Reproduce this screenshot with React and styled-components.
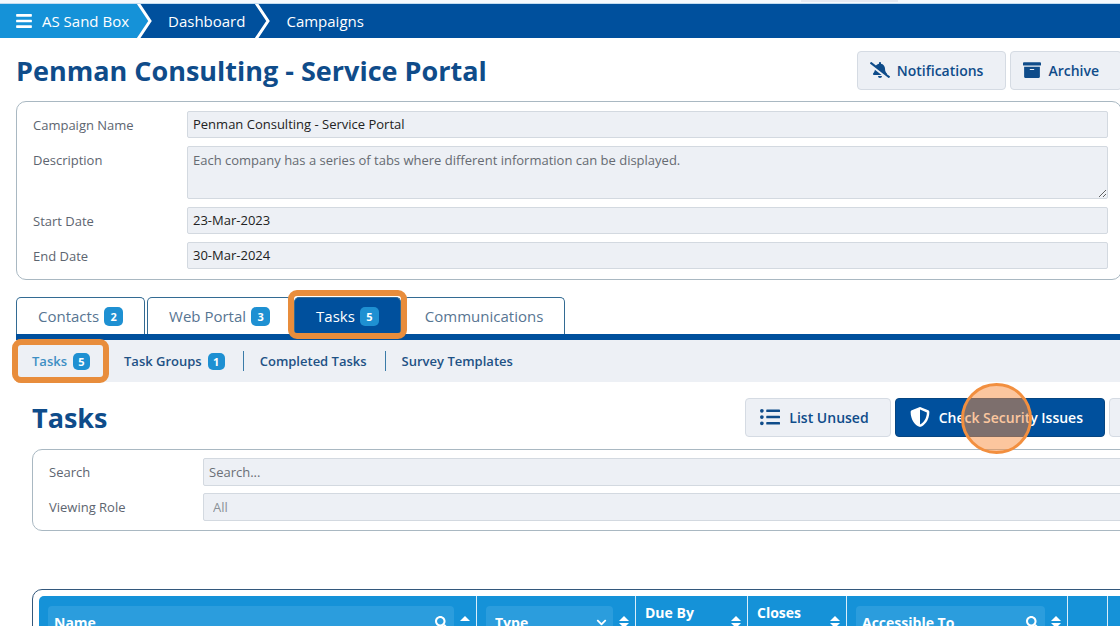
import React, { useState } from 'react'
import styled, { createGlobalStyle, css } from 'styled-components'
import { FaBars, FaBellSlash, FaArchive, FaListUl, FaShieldAlt, FaPlus, FaSearch, FaChevronDown } from 'react-icons/fa'

const colors = {
    navy: '#00509d',
    title: '#0f4c8a',
    sky: '#1592d8',
    field: '#edf0f5',
    orange: '#e88d3c',
}

const tabs = [
    { id: 'contacts', label: 'Contacts', count: 2 },
    { id: 'portal', label: 'Web Portal', count: 3 },
    { id: 'tasks', label: 'Tasks', count: 5 },
    { id: 'comms', label: 'Communications' },
]

const subTabs = [
    { id: 'tasks', label: 'Tasks', count: 5 },
    { id: 'groups', label: 'Task Groups', count: 1 },
    { id: 'completed', label: 'Completed Tasks' },
    { id: 'survey', label: 'Survey Templates' },
]

function SortIcon({ up }) {
    return (
        <svg width="10" height="12" viewBox="0 0 10 12" fill="#fff" aria-hidden="true">
            <path d="M0 5 5 0l5 5z" />
            {!up && <path d="M0 7h10l-5 5z" />}
        </svg>
    )
}

function Chevron() {
    return (
        <ChevronSvg viewBox="0 0 14 34" aria-hidden="true">
            <path className="fill" d="M0 0 12 17 0 34z" />
            <path className="line" d="M1 -1 13 17 1 35" />
        </ChevronSvg>
    )
}

function App() {
    const [tab, setTab] = useState('tasks')
    const [name, setName] = useState('Penman Consulting - Service Portal')
    const [description, setDescription] = useState('Each company has a series of tabs where different information can be displayed.')
    const [start, setStart] = useState('23-Mar-2023')
    const [end, setEnd] = useState('30-Mar-2024')

    return (
        <Page>
            <GlobalStyle />
            <BrowserEdge><span /></BrowserEdge>
            <Breadcrumbs aria-label="Breadcrumb">
                <Crumb href="#home" $first><FaBars size={18} />AS Sand Box</Crumb>
                <Chevron />
                <Crumb href="#dashboard">Dashboard</Crumb>
                <Chevron />
                <Crumb href="#campaigns">Campaigns</Crumb>
            </Breadcrumbs>

            <Main>
                <Header>
                    <h1>Penman Consulting - Service Portal</h1>
                    <Actions>
                        <Button type="button" $tight><FaBellSlash size={20} />Notifications</Button>
                        <Button type="button" $tight><FaArchive size={18} />Archive</Button>
                    </Actions>
                </Header>

                <Panel>
                    <FormRow>
                        <label htmlFor="name">Campaign Name</label>
                        <Input id="name" value={name} onChange={e => setName(e.target.value)} />
                    </FormRow>
                    <FormRow>
                        <label htmlFor="description">Description</label>
                        <TextArea id="description" value={description} onChange={e => setDescription(e.target.value)} />
                    </FormRow>
                    <FormRow>
                        <label htmlFor="start">Start Date</label>
                        <Input id="start" value={start} onChange={e => setStart(e.target.value)} />
                    </FormRow>
                    <FormRow>
                        <label htmlFor="end">End Date</label>
                        <Input id="end" value={end} onChange={e => setEnd(e.target.value)} />
                    </FormRow>
                </Panel>

                <Tabs>
                    {tabs.map(t => (
                        <Tab key={t.id} type="button" $active={t.id === tab} onClick={() => setTab(t.id)}>
                            {t.label}
                            {t.count && <Badge>{t.count}</Badge>}
                        </Tab>
                    ))}
                </Tabs>
                <SubNav>
                    {subTabs.map((t, i) => (
                        <SubLink key={t.id} href={`#${t.id}`} $active={i === 0} $divided={i > 1}>
                            {t.label}
                            {t.count && <Badge $small>{t.count}</Badge>}
                        </SubLink>
                    ))}
                </SubNav>

                <Section>
                    <SectionHeader>
                        <h2>Tasks</h2>
                        <Actions>
                            <Button type="button"><FaListUl size={20} />List Unused</Button>
                            <Button type="button" $primary>
                                <FaShieldAlt size={20} />Check Security Issues
                                <ClickMark />
                            </Button>
                            <Button type="button" aria-label="Add task"><FaPlus size={20} /></Button>
                        </Actions>
                    </SectionHeader>

                    <Panel $compact>
                        <FormRow>
                            <label htmlFor="search">Search</label>
                            <Input id="search" placeholder="Search..." $tall />
                        </FormRow>
                        <FormRow>
                            <label htmlFor="role">Viewing Role</label>
                            <Select id="role" defaultValue="all">
                                <option value="all">All</option>
                            </Select>
                        </FormRow>
                    </Panel>

                    <TableFrame>
                        <Table>
                            <colgroup>
                                <col />
                                <Col $w={159} />
                                <Col $w={112} />
                                <Col $w={99} />
                                <Col $w={221} />
                                <Col $w={40} />
                                <Col $w={52} />
                            </colgroup>
                            <thead>
                                <tr>
                                    <th>
                                        <HeadCell>
                                            <Filter>
                                                <input aria-label="Name" placeholder="Name" />
                                                <FaSearch size={13} />
                                            </Filter>
                                            <SortIcon up />
                                        </HeadCell>
                                    </th>
                                    <th>
                                        <HeadCell>
                                            <Filter>
                                                <select aria-label="Type" defaultValue="">
                                                    <option value="">Type</option>
                                                </select>
                                                <FaChevronDown size={11} />
                                            </Filter>
                                            <SortIcon />
                                        </HeadCell>
                                    </th>
                                    <th><HeadCell><Plain>Due By</Plain><SortIcon /></HeadCell></th>
                                    <th><HeadCell><Plain>Closes</Plain><SortIcon /></HeadCell></th>
                                    <th>
                                        <HeadCell>
                                            <Filter>
                                                <input aria-label="Accessible To" placeholder="Accessible To" />
                                                <FaSearch size={13} />
                                            </Filter>
                                            <SortIcon />
                                        </HeadCell>
                                    </th>
                                    <th />
                                    <th />
                                </tr>
                            </thead>
                        </Table>
                    </TableFrame>
                </Section>
            </Main>
        </Page>
    )
}

const GlobalStyle = createGlobalStyle`
    * {
        box-sizing: border-box;
    }

    body {
        margin: 0;
        background: #fff;
        font-family: 'Open Sans', 'Noto Sans', sans-serif;
        font-size: 13px;
        color: #222;
    }

    h1, h2 {
        margin: 0;
        font-size: 27px;
        line-height: 38px;
        font-weight: 700;
        color: ${colors.title};
        white-space: nowrap;
    }

    button, input, textarea, select {
        font-family: inherit;
    }
`

const Page = styled.div`
    height: 100vh;
    overflow: hidden;
`

const BrowserEdge = styled.div`
    display: flex;
    justify-content: flex-end;
    height: 4px;
    padding-right: 222px;
    background: #f5f9fd;
    border-bottom: 1px solid #c3dcf0;

    span {
        width: 97px;
        height: 2px;
        background: #e6eaf2;
    }
`

const Breadcrumbs = styled.nav`
    display: flex;
    height: 34px;
    background: ${colors.navy};
`

const Crumb = styled.a`
    display: flex;
    align-items: center;
    gap: 9px;
    padding: 0 10px 0 17px;
    color: #fff;
    font-size: 15px;
    text-decoration: none;

    ${({ $first }) => $first && css`
        padding: 0 8px 0 15px;
        background: ${colors.sky};

        & + svg .fill {
            fill: ${colors.sky};
        }
    `}
`

const ChevronSvg = styled.svg`
    width: 14px;
    height: 34px;
    overflow: visible;
    clip-path: inset(0 -4px);

    .fill {
        fill: ${colors.navy};
    }

    .line {
        fill: none;
        stroke: #fff;
        stroke-width: 3;
    }
`

const Main = styled.main`
    margin: 0 -2px 0 16px;
`

const Header = styled.header`
    display: flex;
    justify-content: space-between;
    align-items: center;
    padding: 13px 0 11px;
`

const Actions = styled.div`
    display: flex;
    gap: 4px;
`

const Button = styled.button`
    position: relative;
    display: flex;
    align-items: center;
    gap: ${({ $tight }) => ($tight ? 7 : 9)}px;
    height: 39px;
    padding: ${({ $tight }) => ($tight ? '0 22px 1px 12px' : '0 21px 1px 14px')};
    border: 1px solid ${({ $primary }) => ($primary ? '#064581' : '#d5dbe3')};
    border-radius: 4px;
    background: ${({ $primary }) => ($primary ? colors.navy : colors.field)};
    color: ${({ $primary }) => ($primary ? '#fff' : colors.title)};
    font-size: 14px;
    font-weight: 600;
    white-space: nowrap;
`

const ClickMark = styled.span`
    position: absolute;
    top: -16px;
    left: 65px;
    width: 71px;
    height: 71px;
    border: 3px solid #f28f3f;
    border-radius: 50%;
    background: rgba(250, 142, 62, 0.5);
    pointer-events: none;
`

const Panel = styled.div`
    display: flex;
    flex-direction: column;
    gap: ${({ $compact }) => ($compact ? 7 : 8)}px;
    padding: ${({ $compact }) => ($compact ? '8px 12px 9px 16px' : '9px 13px 10px 16px')};
    border: 1px solid #a9b8c2;
    border-radius: 10px;
`

const FormRow = styled.div`
    display: grid;
    grid-template-columns: 154px 1fr;

    label {
        padding-top: 5px;
        line-height: 18px;
        color: #5d6570;
    }
`

const fieldStyle = css`
    display: block;
    width: 100%;
    margin: 0;
    border: 1px solid #d3d9e0;
    border-radius: 2px;
    background: ${colors.field};
    font-size: 13px;
    outline: none;
`

const Input = styled.input`
    ${fieldStyle}
    height: ${({ $tall }) => ($tall ? 28 : 27)}px;
    padding: 0 5px ${({ $tall }) => ($tall ? 0 : 1)}px;
    color: #222;

    &::placeholder {
        color: #6a6f76;
    }
`

const TextArea = styled.textarea`
    ${fieldStyle}
    height: 53px;
    padding: 4px 5px;
    line-height: 18px;
    color: #666b72;
    resize: vertical;
`

const Select = styled.select`
    ${fieldStyle}
    height: 28px;
    padding: 0 9px;
    color: #8a9097;
    appearance: none;
`

const Badge = styled.span`
    display: inline-flex;
    align-items: center;
    justify-content: center;
    width: ${({ $small }) => ($small ? 17 : 19)}px;
    height: ${({ $small }) => ($small ? 17 : 19)}px;
    border-radius: 5px;
    background: #1e90d2;
    color: #fff;
    font-size: 11px;
    font-weight: 700;
`

const Tabs = styled.div`
    display: flex;
    gap: 2px;
    height: 43px;
    margin-top: 17px;
    border-bottom: 6px solid ${colors.navy};
`

/* orange frame drawn round the highlighted item */
const highlight = css`
    &::after {
        content: '';
        position: absolute;
        inset: -8px -7px -5px;
        border: 6px solid ${colors.orange};
        border-radius: 9px;
        z-index: 1;
        pointer-events: none;
    }
`

const Tab = styled.button`
    position: relative;
    display: flex;
    align-items: center;
    gap: 5px;
    padding: 0 21px;
    border: 1px solid #336b93;
    border-bottom: 0;
    border-radius: 5px 5px 0 0;
    background: ${({ $active }) => ($active ? colors.navy : '#fff')};
    color: ${({ $active }) => ($active ? '#fff' : '#577592')};
    font-size: 15px;
    ${({ $active }) => $active && highlight}
`

const SubNav = styled.nav`
    display: flex;
    align-items: center;
    height: 42px;
    background: ${colors.field};
`

const SubLink = styled.a`
    position: relative;
    display: flex;
    align-items: center;
    gap: 6px;
    height: 20px;
    padding: 0 18px 0 16px;
    border-left: ${({ $divided }) => ($divided ? '1px solid #3a7ba8' : '0')};
    color: ${({ $active }) => ($active ? '#3d8fc4' : '#1e5285')};
    font-size: 13px;
    font-weight: 600;
    text-decoration: none;

    ${({ $active }) => $active && css`
        ${highlight}

        &::after {
            inset: -12px -1px -12px -4px;
        }
    `}
`

const Section = styled.section`
    margin: 16px -44px 0 16px;
`

const SectionHeader = styled.div`
    display: flex;
    justify-content: space-between;
    align-items: center;
    margin-bottom: 12px;
`

const TableFrame = styled.div`
    margin-top: 58px;
    padding: 6px;
    border: 1px solid #33587c;
    border-radius: 10px;
`

const Table = styled.table`
    width: 100%;
    table-layout: fixed;
    border-spacing: 0;
    border-radius: 5px;
    overflow: hidden;
    background: ${colors.sky};
    color: #fff;
    font-size: 14px;

    th {
        height: 52px;
        padding: 9px 6px 9px 9px;
        text-align: left;
    }

    th + th {
        border-left: 1px solid #d9eefa;
    }
`

const Col = styled.col`
    width: ${({ $w }) => $w}px;
`

const HeadCell = styled.div`
    display: flex;
    align-items: center;
    gap: 6px;
`

const Filter = styled.div`
    display: flex;
    flex: 1;
    min-width: 0;
    align-items: center;
    height: 32px;
    padding: 0 6px;
    border-radius: 4px;
    background: #2b9ddd;

    input, select {
        flex: 1;
        min-width: 0;
        padding: 0;
        border: 0;
        outline: none;
        background: transparent;
        color: #fff;
        font-size: 14px;
        font-weight: 700;
        appearance: none;
    }

    select {
        padding-left: 3px;
    }

    input::placeholder {
        color: #fff;
    }
`

const Plain = styled.div`
    flex: 1;
    height: 34px;
    line-height: 16px;
`

export default App
